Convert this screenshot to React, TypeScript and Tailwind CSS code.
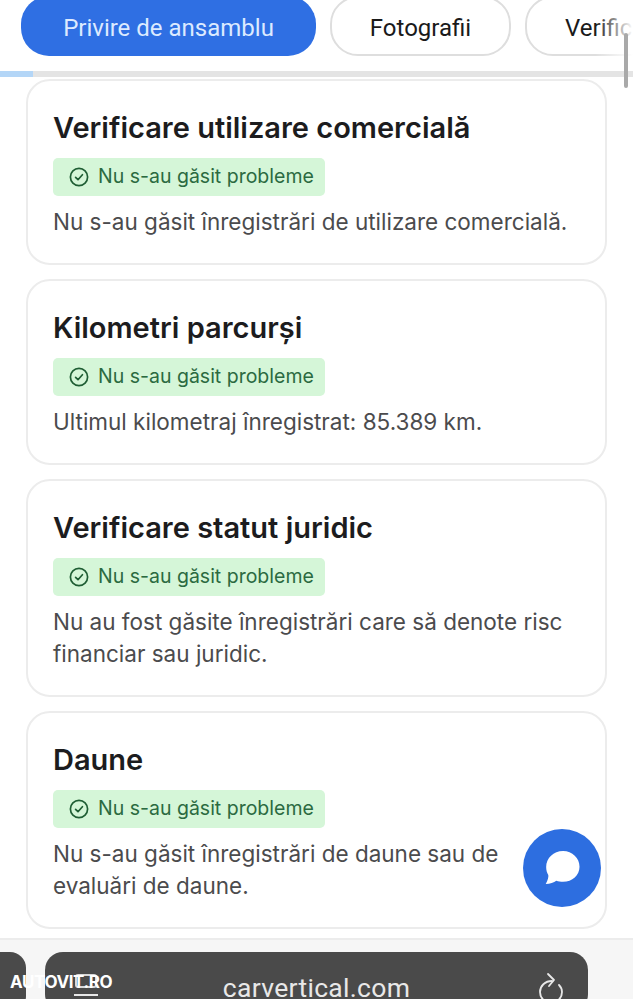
import React from "react";

function Check() {
  return (
    <svg width="20" height="20" viewBox="0 0 20 20" fill="none" stroke="#1f5e34" strokeWidth="1.7" strokeLinecap="round" strokeLinejoin="round" className="shrink-0">
      <circle cx="10" cy="10" r="8.6" />
      <path d="M6.6 10.3l2.4 2.4 4.4-5" />
    </svg>
  );
}

function Card({ title, body }: { title: string; body: React.ReactNode }) {
  return (
    <section className="rounded-[24px] border-2 border-[#ececec] bg-white pl-[25px] pr-[24px] pt-[29px] pb-[25px]">
      <h2 className="text-[29px] leading-[36px] font-semibold text-[#1c1c1e]">{title}</h2>
      <div className="mt-[12px] flex h-[38px] w-[272px] items-center gap-[9px] rounded-[5px] bg-[#d5f6d8] pl-[16px] text-[19.5px] text-[#2b6a41]">
        <Check />
        <span>Nu s-au găsit probleme</span>
      </div>
      <p className="mt-[10px] text-[22.5px] leading-[32px] text-[#4b4b4d]">{body}</p>
    </section>
  );
}

export default function App() {
  return (
    <div className="relative flex h-[999px] w-[633px] flex-col overflow-hidden bg-white font-['Inter',sans-serif]">
      <nav className="relative flex h-[71px] shrink-0 items-start gap-[14px] overflow-hidden pl-[21px] font-['Roboto',sans-serif] text-[24px]">
        <div className="-mt-[4px] flex h-[60px] w-[295px] shrink-0 items-center justify-center rounded-[28px] bg-[#2f6fe3] pt-[3px] text-[#dceaff]">Privire de ansamblu</div>
        <div className="-mt-[4px] flex h-[60px] w-[181px] shrink-0 items-center justify-center rounded-[28px] border-2 border-[#dedede] pt-[3px] text-[#1a1a1a]">Fotografii</div>
        <div className="-mt-[4px] flex h-[60px] w-[200px] shrink-0 items-center rounded-[28px] border-2 border-[#dedede] pl-[38px] pt-[3px] text-[#1a1a1a]">Verific</div>
        <div className="absolute right-0 top-0 h-[60px] w-[38px] bg-gradient-to-r from-transparent to-white" />
      </nav>
      <div className="h-[6px] shrink-0 bg-[#e4e4e4]">
        <div className="h-full w-[33px] bg-[#b4d6f7]" />
      </div>
      <main className="flex flex-col gap-[14px] pl-[26px] pr-[26px] pt-[2px]">
        <Card title="Verificare utilizare comercială" body="Nu s-au găsit înregistrări de utilizare comercială." />
        <Card title="Kilometri parcurși" body="Ultimul kilometraj înregistrat: 85.389 km." />
        <Card title="Verificare statut juridic" body={<>Nu au fost găsite înregistrări care să denote risc<br />financiar sau juridic.</>} />
        <Card title="Daune" body={<>Nu s-au găsit înregistrări de daune sau de<br />evaluări de daune.</>} />
      </main>
      <footer className="mt-[9px] flex flex-1 items-start gap-[19px] border-t-2 border-[#ececec] bg-[#f6f6f6] pt-[12px]">
        <div className="-ml-[20px] h-[60px] w-[46px] shrink-0 rounded-[16px] bg-[#4a4a4a]" />
        <div className="relative flex h-[60px] w-[543px] shrink-0 justify-center rounded-[18px] bg-[#4a4a4a] pt-[21px] font-['Roboto',sans-serif] text-[26.5px] leading-[30px] tracking-[0.3px] text-[#e8e8e8]">
          carvertical.com
          <svg className="absolute left-[492px] top-[20px]" width="28" height="34" viewBox="0 0 28 34" fill="none" stroke="#e8e8e8" strokeWidth="1.8" strokeLinecap="round" strokeLinejoin="round">
            <path d="M15 9C8 9 3 14 3 20s5 11 11 11 11-5 11-11c0-3-1-5-3-7" />
            <path d="M11 2l6 6-5 6" />
          </svg>
        </div>
      </footer>

      <span className="absolute left-[75px] top-[974px] h-[14px] w-[22px] rounded-[3px] border-2 border-[#d8d8d8]" />
      <span className="absolute left-[10px] top-[971px] font-['Inter',sans-serif] text-[17px] leading-[22px] font-bold tracking-[-0.4px] text-white">AUTOVIT.RO</span>
      <span className="absolute left-[74px] top-[994px] h-[2px] w-[24px] bg-[#e8e8e8]" />
      <span className="absolute right-[5px] top-[33px] h-[55px] w-[4px] rounded-full bg-[#a9a9a9]" />

      <button className="absolute left-[523px] top-[829px] flex h-[78px] w-[78px] items-center justify-center rounded-full bg-[#2d6ee0]">
        <svg width="38" height="38" viewBox="0 0 36 36" fill="white">
          <path d="M19 2C10 2 3 9 3 17c0 3 .8 5.600 2 7.600.4 1.600-.4 5-2.400 8.600 4-.2 7.800-1.500 10-3.200 2 .7 4 1 6.400 1 8.800 0 15.600-6.400 15.600-14.300C34.600 8.800 27.800 2 19 2z" />
        </svg>
      </button>
    </div>
  );
}
